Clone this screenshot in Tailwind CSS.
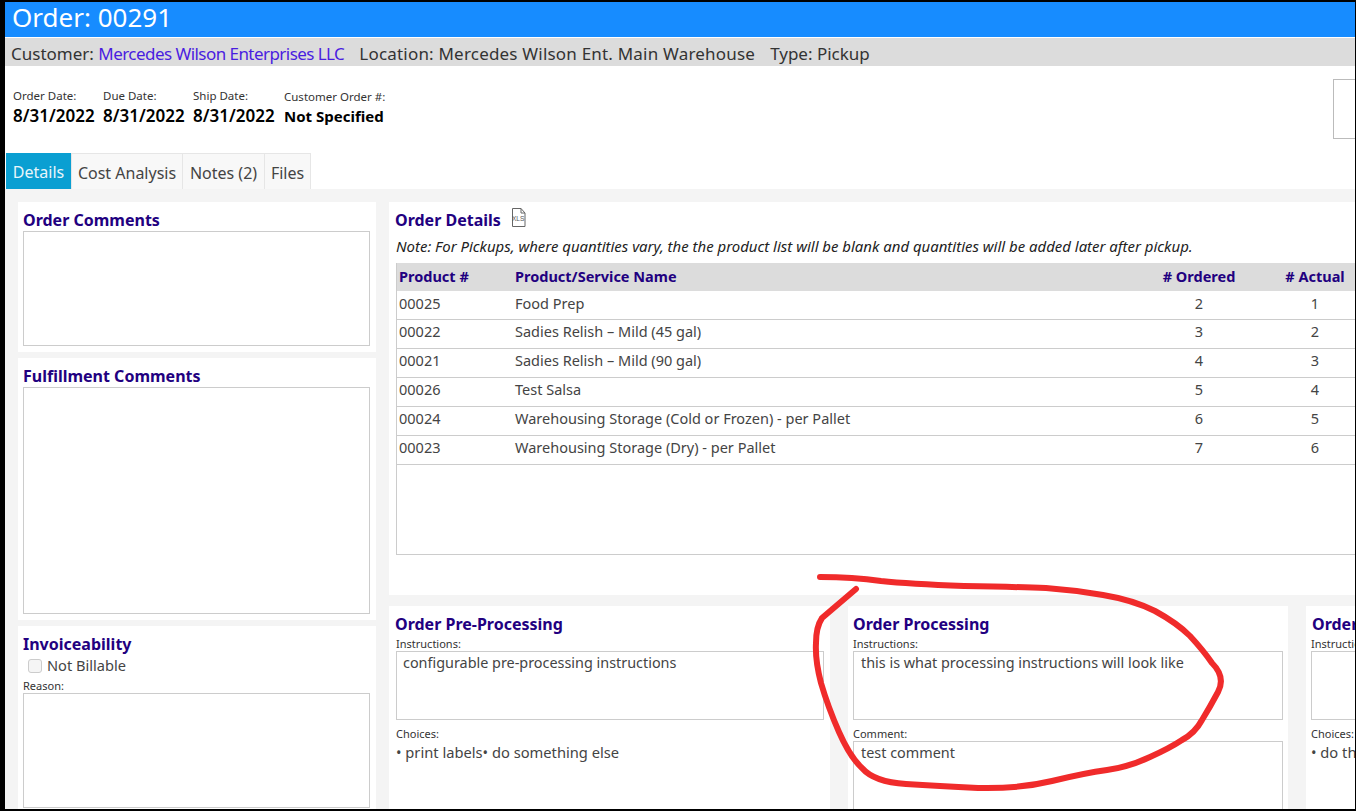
<!DOCTYPE html>
<html lang="en">
  <head>
    <meta charset="UTF-8" />
    <title>Order 00291</title>
    <script src="https://cdn.jsdelivr.net/npm/@tailwindcss/browser@4"></script>
  </head>
  <body class="bg-black overflow-hidden font-['Noto_Sans',sans-serif] text-[#444]">
    <div class="relative w-[1356px] h-[811px] border-l-[5px] border-t-2 border-r border-b-2 border-black bg-white overflow-hidden">
      <div class="h-[35px] bg-[#178cff] pl-[7px] text-white text-[26px] leading-[30px]">Order: 00291</div>
      <div class="mt-px h-[28px] bg-[#dcdcdc] pl-[6px] flex gap-[15px] text-[#333] text-[17px] leading-[32px] whitespace-nowrap">
        <span>Customer: <span class="text-[#4a1de0] tracking-[-0.55px]">Mercedes Wilson Enterprises LLC</span></span>
        <span class="tracking-[0.2px]">Location: Mercedes Wilson Ent. Main Warehouse</span>
        <span>Type: Pickup</span>
      </div>

      <div class="h-[87px] flex pl-[8px] pt-[23px] text-black">
        <div class="w-[90px]"><div class="text-[11.5px] h-[16px] leading-[14px] text-[#333]">Order Date:</div><div class="text-[17px] leading-[22px] font-semibold">8/31/2022</div></div>
        <div class="w-[90px]"><div class="text-[11.5px] h-[16px] leading-[14px] text-[#333]">Due Date:</div><div class="text-[17px] leading-[22px] font-semibold">8/31/2022</div></div>
        <div class="w-[91px]"><div class="text-[11.5px] h-[16px] leading-[14px] text-[#333]">Ship Date:</div><div class="text-[17px] leading-[22px] font-semibold">8/31/2022</div></div>
        <div><div class="text-[11.5px] h-[16px] leading-[16px] text-[#333]">Customer Order #:</div><div class="text-[15px] leading-[22px] font-bold">Not Specified</div></div>
        <div class="ml-auto mt-[-10px] w-[22px] h-[60px] border border-r-0 border-[#bbb]"></div>
      </div>

      <div class="h-[36px] flex pl-px text-[16px] leading-[38px]">
        <div class="w-[65px] bg-[#0a9fd2] text-[#e8f6fb] text-center">Details</div>
        <div class="w-[112px] bg-[#f8f8f8] border-x border-t border-[#e6e6e6] text-center">Cost Analysis</div>
        <div class="w-[82px] bg-[#f8f8f8] border-r border-t border-[#e6e6e6] text-center">Notes (2)</div>
        <div class="w-[46px] bg-[#f8f8f8] border-r border-t border-[#e6e6e6] text-center">Files</div>
      </div>

      <div class="bg-[#f4f4f4] h-[620px] flex pl-[13px] pt-[13px] gap-[13px]">
        <div class="w-[358px] shrink-0 flex flex-col gap-[6px]">
          <section class="h-[150px] shrink-0 bg-white px-[5px]">
            <h2 class="pt-[8px] h-[29px] text-[16px] leading-[20px] font-bold text-[#220080]">Order Comments</h2>
            <div class="h-[115px] w-[347px] border border-[#ccc]"></div>
          </section>
          <section class="h-[262px] shrink-0 bg-white px-[5px]">
            <h2 class="pt-[8px] h-[29px] text-[16px] leading-[20px] font-bold text-[#220080]">Fulfillment Comments</h2>
            <div class="h-[227px] w-[347px] border border-[#ccc]"></div>
          </section>
          <section class="h-[190px] shrink-0 bg-white px-[5px]">
            <h2 class="pt-[8px] h-[29px] text-[16px] leading-[20px] font-bold text-[#220080]">Invoiceability</h2>
            <label class="flex items-center gap-[5px] pl-[5px] h-[22px] text-[14.6px]">
              <span class="w-[14px] h-[14px] rounded-[3px] border border-[#ccc] bg-[#f5f5f5]"></span>
              Not Billable
            </label>
            <div class="text-[11px] leading-[14px] mt-[2px] h-[14px] text-[#333]">Reason:</div>
            <div class="h-[115px] w-[347px] border border-[#ccc]"></div>
          </section>
        </div>

        <div class="w-[967px] shrink-0 flex flex-col gap-[11px]">
          <section class="h-[393px] shrink-0 bg-white pl-[7px]">
            <h2 class="pt-[8px] h-[29px] flex gap-[10px] text-[16px] leading-[20px] font-bold text-[#220080]">
              <span class="ml-[-1px]">Order Details</span>
              <svg class="mt-[-2px] w-[15px] h-[19px]" viewBox="0 0 15 19" fill="none">
                <path d="M1.5 .5H10L14 5V18.5H1.5Z M10 .5V5H14" fill="white" stroke="#666" />
                <text x="1" y="13" font-size="6.5" font-weight="400" fill="#555" font-family="Liberation Sans">XLS</text>
              </svg>
            </h2>
            <p class="h-[32px] text-[14.95px] leading-[31px] italic text-[#222] whitespace-nowrap">Note: For Pickups, where quantities vary, the the product list will be blank and quantities will be added later after pickup.</p>
            <div class="h-[292px] w-[978px] border-l border-b border-[#ccc] text-[14.5px]">
              <div class="h-[28px] pb-px bg-[#dcdcdc] grid grid-cols-[116px_1fr_114px_118px] items-center pl-[2px] font-bold text-[#220080]">
                <span>Product #</span><span>Product/Service Name</span><span class="text-center">&#35; Ordered</span><span class="text-center">&#35; Actual</span>
              </div>
              <div class="h-[29px] pb-[3px] border-b border-[#ccc] grid grid-cols-[116px_1fr_114px_118px] items-center pl-[2px]"><span>00025</span><span>Food Prep</span><span class="text-center">2</span><span class="text-center">1</span></div>
              <div class="h-[29px] pb-[4px] border-b border-[#ccc] grid grid-cols-[116px_1fr_114px_118px] items-center pl-[2px]"><span>00022</span><span>Sadies Relish – Mild (45 gal)</span><span class="text-center">3</span><span class="text-center">2</span></div>
              <div class="h-[29px] pb-[4px] border-b border-[#ccc] grid grid-cols-[116px_1fr_114px_118px] items-center pl-[2px]"><span>00021</span><span>Sadies Relish – Mild (90 gal)</span><span class="text-center">4</span><span class="text-center">3</span></div>
              <div class="h-[29px] pb-[4px] border-b border-[#ccc] grid grid-cols-[116px_1fr_114px_118px] items-center pl-[2px]"><span>00026</span><span>Test Salsa</span><span class="text-center">5</span><span class="text-center">4</span></div>
              <div class="h-[29px] pb-[4px] border-b border-[#ccc] grid grid-cols-[116px_1fr_114px_118px] items-center pl-[2px]"><span>00024</span><span>Warehousing Storage (Cold or Frozen) - per Pallet</span><span class="text-center">6</span><span class="text-center">5</span></div>
              <div class="h-[29px] pb-[4px] border-b border-[#ccc] grid grid-cols-[116px_1fr_114px_118px] items-center pl-[2px]"><span>00023</span><span>Warehousing Storage (Dry) - per Pallet</span><span class="text-center">7</span><span class="text-center">6</span></div>
            </div>
          </section>

          <div class="flex gap-[18px] h-[203px]">
            <section class="w-[441px] shrink-0 bg-white pl-[7px]">
              <h2 class="pt-[8px] h-[29px] text-[16px] leading-[20px] font-bold text-[#220080] ml-[-1px]">Order Pre-Processing</h2>
              <div class="text-[11px] leading-[18px] h-[16px] text-[#333]">Instructions:</div>
              <div class="w-[428px] h-[69px] border border-[#ccc] pl-[6px] text-[14.4px] leading-[22px]">configurable pre-processing instructions</div>
              <div class="text-[11px] leading-[14px] mt-[7px] h-[15px] text-[#333]">Choices:</div>
              <div class="text-[14.7px] leading-[21px]">• print labels• do something else</div>
            </section>
            <section class="w-[440px] shrink-0 bg-white pl-[5px]">
              <h2 class="pt-[8px] h-[29px] text-[16px] leading-[20px] font-bold text-[#220080]">Order Processing</h2>
              <div class="text-[11px] leading-[18px] h-[16px] text-[#333]">Instructions:</div>
              <div class="w-[430px] h-[69px] border border-[#ccc] pl-[7px] text-[14.4px] leading-[22px]">this is what processing instructions will look like</div>
              <div class="text-[11px] leading-[14px] mt-[7px] h-[14px] text-[#333]">Comment:</div>
              <div class="w-[430px] h-[80px] border border-[#ccc] pl-[7px] text-[14.4px] leading-[22px]">test comment</div>
            </section>
            <section class="w-[200px] shrink-0 bg-white pl-[5px]">
              <h2 class="pt-[8px] h-[29px] pl-px text-[16px] leading-[20px] font-bold text-[#220080]">Order Fulfillment</h2>
              <div class="text-[11px] leading-[18px] h-[16px] text-[#333]">Instructions:</div>
              <div class="w-[190px] h-[69px] border border-[#ccc]"></div>
              <div class="text-[11px] leading-[14px] mt-[7px] h-[15px] text-[#333]">Choices:</div>
              <div class="text-[14.7px] leading-[21px]">• do this</div>
            </section>
          </div>
        </div>
      </div>

      <!-- hand drawn annotation on top of the page -->
      <svg class="absolute left-[-5px] top-[-2px] pointer-events-none" width="1356" height="811" fill="none">
        <path d="M820 577 Q853 577 881 581 Q909 584 964 586 Q1019 587 1046 588 Q1074 590 1103 595 Q1133 600 1155 611 Q1177 623 1190 636 Q1203 650 1212 663 Q1226 677 1218 692 Q1210 707 1202 720 Q1195 733 1182 740 Q1170 748 1150 757 Q1129 767 1107 770 Q1085 773 1052 781 Q1019 789 978 788 Q938 786 906 784 Q874 782 862 768 Q850 757 839 732 Q828 707 821 683 Q815 660 816 643 Q816 627 822 618 L856 589" stroke="#f02b2b" stroke-width="6" stroke-linecap="round" stroke-linejoin="round" />
      </svg>
    </div>
  </body>
</html>
